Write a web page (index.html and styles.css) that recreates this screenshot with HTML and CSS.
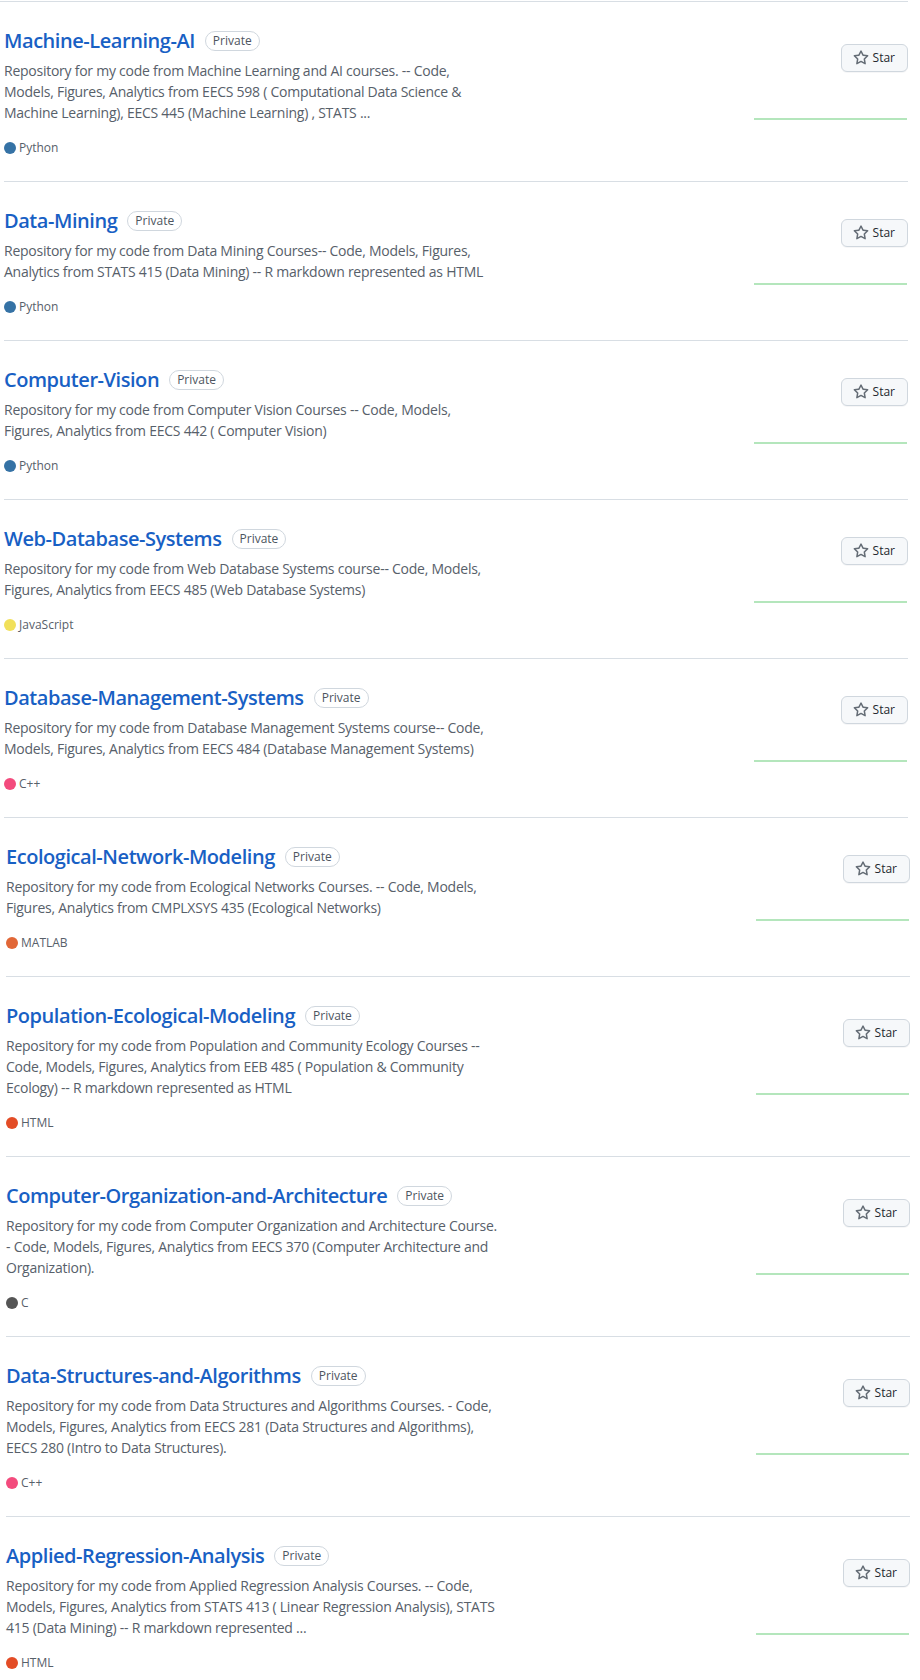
FILE: index.html
```html
<!DOCTYPE html>
<html lang="en">
<head>
<meta charset="utf-8">
<title>Repositories</title>
<link rel="stylesheet" href="styles.css">
</head>
<body>
<div class="page">
  <ul class="repo-list">
    <li class="repo">
      <div class="repo-main">
        <h3 class="repo-title"><a href="#" class="repo-name">Machine-Learning-AI</a><span class="label">Private</span></h3>
        <p class="repo-desc">Repository for my code from Machine Learning and AI courses. -- Code, Models, Figures, Analytics from EECS 598 ( Computational Data Science &amp; Machine Learning), EECS 445 (Machine Learning) , STATS ...</p>
        <div class="repo-meta"><span class="lang-dot lang-python"></span><span>Python</span></div>
      </div>
      <div class="repo-side">
        <button class="btn-star"><svg class="star-icon" viewBox="0 0 16 16" width="16" height="16"><path d="M8 .25a.75.75 0 0 1 .673.418l1.882 3.815 4.21.612a.75.75 0 0 1 .416 1.279l-3.046 2.97.719 4.192a.751.751 0 0 1-1.088.791L8 12.347l-3.766 1.980a.75.75 0 0 1-1.088-.79l.72-4.194L.818 6.374a.75.75 0 0 1 .416-1.28l4.21-.611L7.327.668A.75.75 0 0 1 8 .25Zm0 2.445L6.615 5.5a.75.75 0 0 1-.564.41l-3.097.45 2.24 2.184a.75.75 0 0 1 .216.664l-.528 3.084 2.769-1.456a.75.75 0 0 1 .698 0l2.77 1.456-.53-3.084a.75.75 0 0 1 .216-.664l2.24-2.183-3.096-.45a.75.75 0 0 1-.564-.41L8 2.694Z"/></svg><span>Star</span></button>
        <svg class="sparkline" viewBox="0 0 155 32" width="155" height="32"><path d="M1 12H154"/></svg>
      </div>
    </li>
    <li class="repo">
      <div class="repo-main">
        <h3 class="repo-title"><a href="#" class="repo-name">Data-Mining</a><span class="label">Private</span></h3>
        <p class="repo-desc">Repository for my code from Data Mining Courses-- Code, Models, Figures, Analytics from STATS 415 (Data Mining) -- R markdown represented as HTML</p>
        <div class="repo-meta"><span class="lang-dot lang-python"></span><span>Python</span></div>
      </div>
      <div class="repo-side">
        <button class="btn-star"><svg class="star-icon" viewBox="0 0 16 16" width="16" height="16"><path d="M8 .25a.75.75 0 0 1 .673.418l1.882 3.815 4.21.612a.75.75 0 0 1 .416 1.279l-3.046 2.97.719 4.192a.751.751 0 0 1-1.088.791L8 12.347l-3.766 1.98a.75.75 0 0 1-1.088-.79l.72-4.194L.818 6.374a.75.75 0 0 1 .416-1.28l4.21-.611L7.327.668A.75.75 0 0 1 8 .25Zm0 2.445L6.615 5.5a.75.75 0 0 1-.564.41l-3.097.45 2.24 2.184a.75.75 0 0 1 .216.664l-.528 3.084 2.769-1.456a.75.75 0 0 1 .698 0l2.77 1.456-.53-3.084a.75.75 0 0 1 .216-.664l2.24-2.183-3.096-.45a.75.75 0 0 1-.564-.41L8 2.694Z"/></svg><span>Star</span></button>
        <svg class="sparkline" viewBox="0 0 155 32" width="155" height="32"><path d="M1 12H154"/></svg>
      </div>
    </li>
    <li class="repo">
      <div class="repo-main">
        <h3 class="repo-title"><a href="#" class="repo-name">Computer-Vision</a><span class="label">Private</span></h3>
        <p class="repo-desc">Repository for my code from Computer Vision Courses -- Code, Models, Figures, Analytics from EECS 442 ( Computer Vision)</p>
        <div class="repo-meta"><span class="lang-dot lang-python"></span><span>Python</span></div>
      </div>
      <div class="repo-side">
        <button class="btn-star"><svg class="star-icon" viewBox="0 0 16 16" width="16" height="16"><path d="M8 .25a.75.75 0 0 1 .673.418l1.882 3.815 4.21.612a.75.75 0 0 1 .416 1.279l-3.046 2.97.719 4.192a.751.751 0 0 1-1.088.791L8 12.347l-3.766 1.98a.75.75 0 0 1-1.088-.79l.72-4.194L.818 6.374a.75.75 0 0 1 .416-1.28l4.21-.611L7.327.668A.75.75 0 0 1 8 .25Zm0 2.445L6.615 5.5a.75.75 0 0 1-.564.41l-3.097.45 2.24 2.184a.75.75 0 0 1 .216.664l-.528 3.084 2.769-1.456a.75.75 0 0 1 .698 0l2.77 1.456-.53-3.084a.75.75 0 0 1 .216-.664l2.24-2.183-3.096-.45a.75.75 0 0 1-.564-.41L8 2.694Z"/></svg><span>Star</span></button>
        <svg class="sparkline" viewBox="0 0 155 32" width="155" height="32"><path d="M1 12H154"/></svg>
      </div>
    </li>
    <li class="repo">
      <div class="repo-main">
        <h3 class="repo-title"><a href="#" class="repo-name">Web-Database-Systems</a><span class="label">Private</span></h3>
        <p class="repo-desc">Repository for my code from Web Database Systems course-- Code, Models, Figures, Analytics from EECS 485 (Web Database Systems)</p>
        <div class="repo-meta"><span class="lang-dot lang-js"></span><span>JavaScript</span></div>
      </div>
      <div class="repo-side">
        <button class="btn-star"><svg class="star-icon" viewBox="0 0 16 16" width="16" height="16"><path d="M8 .25a.75.75 0 0 1 .673.418l1.882 3.815 4.21.612a.75.75 0 0 1 .416 1.279l-3.046 2.97.719 4.192a.751.751 0 0 1-1.088.791L8 12.347l-3.766 1.98a.75.75 0 0 1-1.088-.79l.72-4.194L.818 6.374a.75.75 0 0 1 .416-1.28l4.21-.611L7.327.668A.75.75 0 0 1 8 .25Zm0 2.445L6.615 5.5a.75.75 0 0 1-.564.41l-3.097.45 2.24 2.184a.75.75 0 0 1 .216.664l-.528 3.084 2.769-1.456a.75.75 0 0 1 .698 0l2.77 1.456-.53-3.084a.75.75 0 0 1 .216-.664l2.24-2.183-3.096-.45a.75.75 0 0 1-.564-.41L8 2.694Z"/></svg><span>Star</span></button>
        <svg class="sparkline" viewBox="0 0 155 32" width="155" height="32"><path d="M1 12H154"/></svg>
      </div>
    </li>
    <li class="repo">
      <div class="repo-main">
        <h3 class="repo-title"><a href="#" class="repo-name">Database-Management-Systems</a><span class="label">Private</span></h3>
        <p class="repo-desc">Repository for my code from Database Management Systems course-- Code, Models, Figures, Analytics from EECS 484 (Database Management Systems)</p>
        <div class="repo-meta"><span class="lang-dot lang-cpp"></span><span>C++</span></div>
      </div>
      <div class="repo-side">
        <button class="btn-star"><svg class="star-icon" viewBox="0 0 16 16" width="16" height="16"><path d="M8 .25a.75.75 0 0 1 .673.418l1.882 3.815 4.21.612a.75.75 0 0 1 .416 1.279l-3.046 2.97.719 4.192a.751.751 0 0 1-1.088.791L8 12.347l-3.766 1.98a.75.75 0 0 1-1.088-.79l.72-4.194L.818 6.374a.75.75 0 0 1 .416-1.28l4.21-.611L7.327.668A.75.75 0 0 1 8 .25Zm0 2.445L6.615 5.5a.75.75 0 0 1-.564.41l-3.097.45 2.24 2.184a.75.75 0 0 1 .216.664l-.528 3.084 2.769-1.456a.75.75 0 0 1 .698 0l2.77 1.456-.53-3.084a.75.75 0 0 1 .216-.664l2.24-2.183-3.096-.45a.75.75 0 0 1-.564-.41L8 2.694Z"/></svg><span>Star</span></button>
        <svg class="sparkline" viewBox="0 0 155 32" width="155" height="32"><path d="M1 12H154"/></svg>
      </div>
    </li>
    <li class="repo repo-shift">
      <div class="repo-main">
        <h3 class="repo-title"><a href="#" class="repo-name">Ecological-Network-Modeling</a><span class="label">Private</span></h3>
        <p class="repo-desc">Repository for my code from Ecological Networks Courses. -- Code, Models, Figures, Analytics from CMPLXSYS 435 (Ecological Networks)</p>
        <div class="repo-meta"><span class="lang-dot lang-matlab"></span><span>MATLAB</span></div>
      </div>
      <div class="repo-side">
        <button class="btn-star"><svg class="star-icon" viewBox="0 0 16 16" width="16" height="16"><path d="M8 .25a.75.75 0 0 1 .673.418l1.882 3.815 4.21.612a.75.75 0 0 1 .416 1.279l-3.046 2.97.719 4.192a.751.751 0 0 1-1.088.791L8 12.347l-3.766 1.98a.75.75 0 0 1-1.088-.79l.72-4.194L.818 6.374a.75.75 0 0 1 .416-1.28l4.21-.611L7.327.668A.75.75 0 0 1 8 .25Zm0 2.445L6.615 5.5a.75.75 0 0 1-.564.41l-3.097.45 2.24 2.184a.75.75 0 0 1 .216.664l-.528 3.084 2.769-1.456a.75.75 0 0 1 .698 0l2.77 1.456-.53-3.084a.75.75 0 0 1 .216-.664l2.24-2.183-3.096-.45a.75.75 0 0 1-.564-.41L8 2.694Z"/></svg><span>Star</span></button>
        <svg class="sparkline" viewBox="0 0 155 32" width="155" height="32"><path d="M1 12H154"/></svg>
      </div>
    </li>
    <li class="repo repo-shift">
      <div class="repo-main">
        <h3 class="repo-title"><a href="#" class="repo-name">Population-Ecological-Modeling</a><span class="label">Private</span></h3>
        <p class="repo-desc">Repository for my code from Population and Community Ecology Courses -- Code, Models, Figures, Analytics from EEB 485 ( Population &amp; Community Ecology) -- R markdown represented as HTML</p>
        <div class="repo-meta"><span class="lang-dot lang-html"></span><span>HTML</span></div>
      </div>
      <div class="repo-side">
        <button class="btn-star"><svg class="star-icon" viewBox="0 0 16 16" width="16" height="16"><path d="M8 .25a.75.75 0 0 1 .673.418l1.882 3.815 4.21.612a.75.75 0 0 1 .416 1.279l-3.046 2.97.719 4.192a.751.751 0 0 1-1.088.791L8 12.347l-3.766 1.98a.75.75 0 0 1-1.088-.79l.72-4.194L.818 6.374a.75.75 0 0 1 .416-1.28l4.21-.611L7.327.668A.75.75 0 0 1 8 .25Zm0 2.445L6.615 5.5a.75.75 0 0 1-.564.41l-3.097.45 2.24 2.184a.75.75 0 0 1 .216.664l-.528 3.084 2.769-1.456a.75.75 0 0 1 .698 0l2.77 1.456-.53-3.084a.75.75 0 0 1 .216-.664l2.24-2.183-3.096-.45a.75.75 0 0 1-.564-.41L8 2.694Z"/></svg><span>Star</span></button>
        <svg class="sparkline" viewBox="0 0 155 32" width="155" height="32"><path d="M1 12H154"/></svg>
      </div>
    </li>
    <li class="repo repo-shift">
      <div class="repo-main">
        <h3 class="repo-title"><a href="#" class="repo-name">Computer-Organization-and-Architecture</a><span class="label">Private</span></h3>
        <p class="repo-desc">Repository for my code from Computer Organization and Architecture Course. - Code, Models, Figures, Analytics from EECS 370 (Computer Architecture and Organization).</p>
        <div class="repo-meta"><span class="lang-dot lang-c"></span><span>C</span></div>
      </div>
      <div class="repo-side">
        <button class="btn-star"><svg class="star-icon" viewBox="0 0 16 16" width="16" height="16"><path d="M8 .25a.75.75 0 0 1 .673.418l1.882 3.815 4.21.612a.75.75 0 0 1 .416 1.279l-3.046 2.97.719 4.192a.751.751 0 0 1-1.088.791L8 12.347l-3.766 1.98a.75.75 0 0 1-1.088-.79l.72-4.194L.818 6.374a.75.75 0 0 1 .416-1.28l4.21-.611L7.327.668A.75.75 0 0 1 8 .25Zm0 2.445L6.615 5.5a.75.75 0 0 1-.564.41l-3.097.45 2.24 2.184a.75.75 0 0 1 .216.664l-.528 3.084 2.769-1.456a.75.75 0 0 1 .698 0l2.77 1.456-.53-3.084a.75.75 0 0 1 .216-.664l2.24-2.183-3.096-.45a.75.75 0 0 1-.564-.41L8 2.694Z"/></svg><span>Star</span></button>
        <svg class="sparkline" viewBox="0 0 155 32" width="155" height="32"><path d="M1 12H154"/></svg>
      </div>
    </li>
    <li class="repo repo-shift">
      <div class="repo-main">
        <h3 class="repo-title"><a href="#" class="repo-name">Data-Structures-and-Algorithms</a><span class="label">Private</span></h3>
        <p class="repo-desc">Repository for my code from Data Structures and Algorithms Courses. - Code, Models, Figures, Analytics from EECS 281 (Data Structures and Algorithms), EECS 280 (Intro to Data Structures).</p>
        <div class="repo-meta"><span class="lang-dot lang-cpp"></span><span>C++</span></div>
      </div>
      <div class="repo-side">
        <button class="btn-star"><svg class="star-icon" viewBox="0 0 16 16" width="16" height="16"><path d="M8 .25a.75.75 0 0 1 .673.418l1.882 3.815 4.21.612a.75.75 0 0 1 .416 1.279l-3.046 2.97.719 4.192a.751.751 0 0 1-1.088.791L8 12.347l-3.766 1.98a.75.75 0 0 1-1.088-.79l.72-4.194L.818 6.374a.75.75 0 0 1 .416-1.28l4.21-.611L7.327.668A.75.75 0 0 1 8 .25Zm0 2.445L6.615 5.5a.75.75 0 0 1-.564.41l-3.097.45 2.24 2.184a.75.75 0 0 1 .216.664l-.528 3.084 2.769-1.456a.75.75 0 0 1 .698 0l2.77 1.456-.53-3.084a.75.75 0 0 1 .216-.664l2.24-2.183-3.096-.45a.75.75 0 0 1-.564-.41L8 2.694Z"/></svg><span>Star</span></button>
        <svg class="sparkline" viewBox="0 0 155 32" width="155" height="32"><path d="M1 12H154"/></svg>
      </div>
    </li>
    <li class="repo repo-shift">
      <div class="repo-main">
        <h3 class="repo-title"><a href="#" class="repo-name">Applied-Regression-Analysis</a><span class="label">Private</span></h3>
        <p class="repo-desc">Repository for my code from Applied Regression Analysis Courses. -- Code, Models, Figures, Analytics from STATS 413 ( Linear Regression Analysis), STATS 415 (Data Mining) -- R markdown represented ...</p>
        <div class="repo-meta"><span class="lang-dot lang-html"></span><span>HTML</span></div>
      </div>
      <div class="repo-side">
        <button class="btn-star"><svg class="star-icon" viewBox="0 0 16 16" width="16" height="16"><path d="M8 .25a.75.75 0 0 1 .673.418l1.882 3.815 4.21.612a.75.75 0 0 1 .416 1.279l-3.046 2.97.719 4.192a.751.751 0 0 1-1.088.791L8 12.347l-3.766 1.98a.75.75 0 0 1-1.088-.79l.72-4.194L.818 6.374a.75.75 0 0 1 .416-1.28l4.21-.611L7.327.668A.75.75 0 0 1 8 .25Zm0 2.445L6.615 5.5a.75.75 0 0 1-.564.41l-3.097.45 2.24 2.184a.75.75 0 0 1 .216.664l-.528 3.084 2.769-1.456a.75.75 0 0 1 .698 0l2.77 1.456-.53-3.084a.75.75 0 0 1 .216-.664l2.24-2.183-3.096-.45a.75.75 0 0 1-.564-.41L8 2.694Z"/></svg><span>Star</span></button>
        <svg class="sparkline" viewBox="0 0 155 32" width="155" height="32"><path d="M1 12H154"/></svg>
      </div>
    </li>
  </ul>
</div>
</body>
</html>
```

FILE: styles.css
```css
* {
  box-sizing: border-box;
}

html,
body {
  margin: 0;
  padding: 0;
  background: #ffffff;
}

body {
  font-family: "Open Sans", "Noto Sans", "Liberation Sans", sans-serif;
  color: #1f2328;
  font-size: 14px;
  line-height: 1.5;
}

.page {
  width: 908px;
  margin-top: 1px;
  border-top: 1px solid #d8dee4;
}

.repo-list {
  list-style: none;
  margin: 0 0 0 4px;
  padding: 0;
}

.repo {
  display: flex;
  justify-content: space-between;
  padding: 24px 0;
  border-bottom: 1px solid #d8dee4;
}

.repo-shift {
  margin-left: 2px;
  margin-right: -2px;
}

.repo-main {
  flex: 1 1 auto;
  min-width: 0;
  display: flex;
  flex-direction: column;
}

.repo-title {
  display: flex;
  align-items: center;
  height: 30px;
  margin: 0;
  font-size: 20px;
  font-weight: 600;
  line-height: 30px;
}

.repo-name {
  color: #1860c4;
  text-decoration: none;
  letter-spacing: -0.45px;
}

.label {
  display: inline-block;
  margin-left: 10px;
  padding: 0 7px;
  font-size: 12px;
  font-weight: 500;
  line-height: 18px;
  color: #4d5560;
  border: 1px solid #d0d7de;
  border-radius: 2em;
}

.repo-desc {
  width: 495px;
  margin: 4px 0 0;
  font-size: 14px;
  line-height: 21px;
  color: #57606a;
  letter-spacing: -0.25px;
}

.repo-meta {
  display: flex;
  align-items: center;
  gap: 3px;
  height: 18px;
  margin-top: 16px;
  font-size: 12px;
  line-height: 18px;
  color: #57606a;
}

.lang-dot {
  display: inline-block;
  width: 12px;
  height: 12px;
  border-radius: 50%;
}

.lang-python { background: #3572a5; }
.lang-js { background: #f1e05a; }
.lang-cpp { background: #f34b7d; }
.lang-matlab { background: #e16737; }
.lang-html { background: #e34c26; }
.lang-c { background: #555555; }

.repo-side {
  flex: 0 0 155px;
  margin-left: 16px;
  display: flex;
  flex-direction: column;
  justify-content: space-around;
  align-items: flex-end;
}

.btn-star {
  display: inline-flex;
  align-items: center;
  gap: 4px;
  height: 28px;
  padding: 3px 12px 3px 11px;
  font-family: inherit;
  font-size: 12px;
  font-weight: 500;
  line-height: 20px;
  color: #24292f;
  background: #f6f8fa;
  border: 1px solid #d0d7de;
  border-radius: 6px;
  box-shadow: 0 1px 0 rgba(31, 35, 40, 0.04);
}

.star-icon {
  display: block;
  fill: #656d76;
}

.sparkline {
  display: block;
}

.sparkline path {
  fill: none;
  stroke: #b4e6bc;
  stroke-width: 2;
}
```
